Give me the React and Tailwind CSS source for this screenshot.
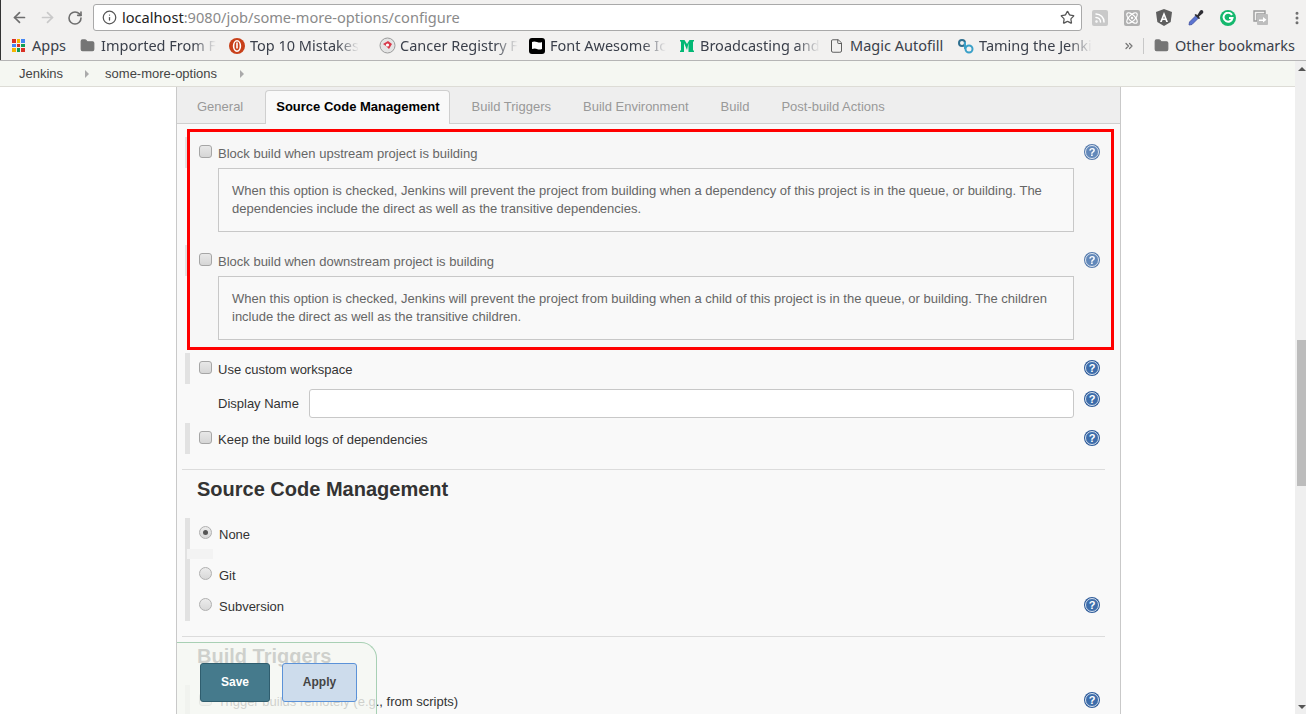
import { ArrowLeft, ArrowRight, RotateCw, Info, Star, Rss, Atom, EllipsisVertical, Folder, File, ChevronsRight } from 'lucide-react';

const appColors = ['#d93025', '#f4b400', '#4285f4', '#4285f4', '#d93025', '#0f9d58', '#f4b400', '#0f9d58', '#d93025'];

const Bookmark = ({ width, icon, gap = 'gap-[5px]', fade, children }) => (
  <div className={`flex items-center shrink-0 ${gap}`} style={{ width }}>
    {icon}
    <span className={`text-[14.5px] text-[#3a3f4a] whitespace-nowrap ${fade ? '[mask-image:linear-gradient(to_right,black_80%,transparent_100%)]' : ''}`}>
      {children}
    </span>
  </div>
);

const FolderIcon = () => <Folder className="w-[15px] h-[15px] text-[#757575] shrink-0" fill="#757575" />;

const BrowserChrome = () => (
  <header className="border-l border-[#333] bg-[#f2f1f0] font-['Noto_Sans',sans-serif]">
    {/* toolbar */}
    <div className="h-[33px] flex items-center pl-[10px] pt-[2px]">
      <ArrowLeft className="w-[17px] h-[17px] text-[#6e6e6e]" strokeWidth={2.4} />
      <ArrowRight className="w-[17px] h-[17px] text-[#c9c9c9] ml-[11px]" strokeWidth={2.4} />
      <RotateCw className="w-[16px] h-[16px] text-[#6e6e6e] ml-[11px]" strokeWidth={2.4} />
      <div className="ml-[10px] w-[989px] h-[27px] bg-white border border-[#a9a9a9] rounded-[3px] flex items-center pl-[8px] pr-[6px]">
        <Info className="w-[15px] h-[15px] text-[#555]" />
        <span className="ml-[5px] text-[14.6px] text-[#222]">localhost<span className="text-[#8a8a8a]">:9080/job/some-more-options/configure</span></span>
        <Star className="w-[15px] h-[15px] text-[#555] ml-auto" strokeWidth={2} />
      </div>
      <div className="ml-[10px] flex items-center gap-[16px]">
        <div className="w-[16px] h-[16px] rounded-[2px] bg-[#c9c9c9] flex items-center justify-center"><Rss className="w-[12px] h-[12px] text-white" strokeWidth={3} /></div>
        <div className="w-[16px] h-[16px] rounded-[2px] bg-[#b0b0b0] flex items-center justify-center"><Atom className="w-[14px] h-[14px] text-white" /></div>
        <svg width="16" height="17" viewBox="0 0 16 17">
          <path d="M8 0 L16 3 L14.7 13 L8 17 L1.3 13 L0 3 Z" fill="#5f5f5f" />
          <path d="M8 3 L4 13 H5.8 L6.6 11 H9.4 L10.2 13 H12 Z M7.2 9.5 L8 7.2 L8.8 9.5 Z" fill="#fff" />
        </svg>
        <svg width="16" height="17" viewBox="0 0 16 17">
          <path d="M1 16 L1.5 13 L8 6.5 L10.5 9 L4 15.5 Z" fill="#5b74d0" stroke="#3f4f9f" strokeWidth="0.8" />
          <path d="M7.5 5 L9.5 6 L12 1.8 Q13.5 0.2 15 1.8 Q16 3.2 14.6 4.6 L11 7.5 L12 9.5 L10.8 10 L6.5 6 Z" fill="#2e2e34" />
        </svg>
        <div className="w-[16px] h-[16px] rounded-full bg-[#15b86e] flex items-center justify-center">
          <svg width="12" height="12" viewBox="0 0 12 12" fill="none" stroke="#fff" strokeWidth="2"><path d="M10 3 A4.5 4.5 0 1 0 10.5 6 H7" /></svg>
        </div>
        <svg width="16" height="16" viewBox="0 0 16 16" className="ml-px">
          <path d="M1 1 H12 V4 H4 V11 H1 Z" fill="none" stroke="#9a9a9a" strokeWidth="1.4" />
          <rect x="4" y="4" width="11" height="11" rx="1" fill="#bdbdbd" />
          <path d="M6 9.5 H10 V7 L13.5 9.8 L10 12.5 V11 H6 Z" fill="#fff" />
        </svg>
        <EllipsisVertical className="w-[16px] h-[16px] text-[#6e6e6e] ml-[4px]" strokeWidth={2.5} />
      </div>
    </div>
    {/* bookmarks */}
    <div className="h-[27px] flex items-center pl-[11px] pb-[2px]">
      <Bookmark width="68px" gap="gap-[7px]" icon={
        <div className="grid grid-cols-3 gap-[1px] w-[13px] shrink-0">
          {appColors.map((c, i) => <span key={i} className="w-[3.6px] h-[3.6px]" style={{ background: c }} />)}
        </div>
      }>Apps</Bookmark>
      <Bookmark width="149px" gap="gap-[6px]" icon={<FolderIcon />} fade>Imported From F</Bookmark>
      <Bookmark width="150px" icon={
        <svg width="16" height="16" viewBox="0 0 16 16" className="shrink-0">
          <circle cx="8" cy="8" r="8" fill="#c8401a" />
          <ellipse cx="8" cy="8" rx="3.4" ry="5.2" fill="none" stroke="#fff" strokeWidth="1.6" />
          <rect x="7.2" y="4.5" width="1.6" height="6" fill="#fff" />
        </svg>
      } fade>Top 10 Mistakes</Bookmark>
      <Bookmark width="150px" gap="gap-[4px]" icon={
        <svg width="17" height="17" viewBox="0 0 17 17" className="shrink-0">
          <circle cx="8.5" cy="8.5" r="7.5" fill="#e4e4e4" stroke="#9a9a9a" />
          <path d="M4 7 L9 4 L13 7 L10 12 L7 9 Z" fill="#d8394a" />
          <circle cx="8.5" cy="8" r="1.6" fill="#fff" />
        </svg>
      } fade>Cancer Registry F</Bookmark>
      <Bookmark width="151px" icon={
        <div className="w-[16px] h-[16px] rounded-[3px] bg-black flex items-center justify-center shrink-0">
          <svg width="12" height="10" viewBox="0 0 12 10"><path d="M1 1 Q3 0 6 1 T11 1 V8 Q8 9 6 8 T1 8 Z" fill="#fff" /></svg>
        </div>
      } fade>Font Awesome Ic</Bookmark>
      <Bookmark width="150px" gap="gap-[6px]" icon={
        <svg width="14" height="12" viewBox="0 0 14 12" className="shrink-0">
          <path d="M0 0 H4.5 L7 4 L9.5 0 H14 V1 L13 2 V10 L14 11 V12 H8.5 V3 L7 10 L4 3 V12 H0 V11 L1 10 V2 L0 1 Z" fill="#02b875" />
        </svg>
      } fade>Broadcasting and</Bookmark>
      <Bookmark width="128px" gap="gap-[6px]" icon={<File className="w-[15px] h-[16px] text-[#555] shrink-0 -ml-[1px]" strokeWidth={1.5} />}>Magic Autofill</Bookmark>
      <Bookmark width="165px" gap="gap-[5px]" icon={
        <svg width="16" height="16" viewBox="0 0 16 16" fill="none" strokeWidth="2" className="shrink-0">
          <circle cx="4" cy="5" r="3" stroke="#2f6f8f" />
          <circle cx="11" cy="11" r="3.5" stroke="#3aa0c8" />
          <path d="M7 4 V11" stroke="#3aa0c8" />
        </svg>
      } fade>Taming the Jenki</Bookmark>
      <ChevronsRight className="w-[12px] h-[12px] text-[#777]" strokeWidth={2.5} />
      <div className="w-px h-[16px] bg-[#c8c8c8] ml-[8px] mr-[10px]" />
      <Bookmark width="142px" gap="gap-[6px]" icon={<FolderIcon />}>Other bookmarks</Bookmark>
    </div>
  </header>
);

const HelpIcon = ({ faded }) => (
  <svg width="16" height="16" viewBox="0 0 16 16" className={`shrink-0 ${faded ? 'opacity-80' : ''}`}>
    <circle cx="8" cy="8" r="8" fill="#2f5c9a" />
    <circle cx="8" cy="8" r="6.5" fill="#3d6dab" stroke="#e8eef6" strokeWidth="0.9" />
    <text x="8" y="12" textAnchor="middle" fontSize="11" fontWeight="700" fill="#fff" fontFamily="Liberation Sans, sans-serif">?</text>
  </svg>
);

const Checkbox = () => (
  <span className="block w-[13px] h-[13px] shrink-0 rounded-[3px] border border-[#a6a6a6] bg-gradient-to-b from-[#e8e8e8] to-[#d6d6d6] -translate-y-px" />
);

const Radio = ({ checked }) => (
  <span className="w-[13px] h-[13px] shrink-0 rounded-full border border-[#b0b0b0] bg-gradient-to-b from-[#ececec] to-[#d8d8d8] flex items-center justify-center -translate-y-px">
    {checked && <span className="w-[5px] h-[5px] rounded-full bg-[#555]" />}
  </span>
);

const HelpBox = ({ children }) => (
  <div className="ml-[28px] mr-[37px] h-[64px] border border-[#c8c8c8] bg-[#f9f9f9] px-[13px] pt-[13px] text-[13px] leading-[18px] text-[#666]">
    {children}
  </div>
);

const HighlightedRow = ({ label }) => (
  <div className="h-[31px] -ml-[5px] flex items-center text-[13px] text-[#666]">
    <span className="w-[2px] h-full bg-[#e2e2e2]" />
    <span className="ml-[12px]"><Checkbox /></span>
    <span className="ml-[6px] pt-[2px] flex-1">{label}</span>
    <span className="mr-[11px] -translate-y-px"><HelpIcon faded /></span>
  </div>
);

// x=185 is where the grey bars start
const OptionRow = ({ label, className = '' }) => (
  <div className={`h-[31px] flex items-center text-[13px] text-[#333] ${className}`}>
    <span className="w-[5px] h-full bg-[#e2e2e2]" />
    <span className="ml-[9px]"><Checkbox /></span>
    <span className="ml-[6px] pt-[2px] flex-1">{label}</span>
    <span className="-translate-y-px"><HelpIcon /></span>
  </div>
);

const RadioRow = ({ label, checked, help }) => (
  <div className="h-[31px] flex items-center text-[13px] text-[#333]">
    <span className="ml-[9px]"><Radio checked={checked} /></span>
    <span className="ml-[7px] pt-[2px] flex-1">{label}</span>
    {help && <span className="-translate-y-px"><HelpIcon /></span>}
  </div>
);

const tabs = [
  { label: 'Build Triggers', className: 'ml-[22px]' },
  { label: 'Build Environment', className: 'ml-[32px]' },
  { label: 'Build', className: 'ml-[32px]' },
  { label: 'Post-build Actions', className: 'ml-[32px]' },
];

const TabBar = () => (
  <div className="h-[37px] bg-[#eeeeee] border-b border-[#cfcfcf] flex items-end text-[13px] text-[#999]">
    <span className="ml-[20px] h-[33px] flex items-center">General</span>
    <span className="ml-[22px] h-[34px] -mb-px pl-[10px] pr-[9px] pb-[2px] bg-[#f9f9f9] border border-[#cfcfcf] border-b-0 rounded-t-[4px] flex items-center font-bold text-black">
      Source Code Management
    </span>
    {tabs.map((t) => (
      <span key={t.label} className={`${t.className} h-[33px] flex items-center`}>{t.label}</span>
    ))}
  </div>
);

export default function App() {
  return (
    <div className="w-[1306px] h-[714px] overflow-hidden bg-white font-['Liberation_Sans',Arial,sans-serif]">
      <BrowserChrome />
      <div className="border-t border-[#b5b5b5] flex h-[654px]">
        <div className="w-[1295px] flex flex-col">
          {/* breadcrumb */}
          <div className="h-[26px] shrink-0 bg-[#f5f7f2] border-b border-[#dddcd6] flex items-center text-[13px] text-[#444] pl-[19px]">
            <span>Jenkins</span>
            <span className="ml-[22px] w-0 h-0 border-y-[4px] border-y-transparent border-l-[4px] border-l-[#aaa]" />
            <span className="ml-[16px]">some-more-options</span>
            <span className="ml-[23px] w-0 h-0 border-y-[4px] border-y-transparent border-l-[4px] border-l-[#aaa]" />
          </div>
          <div className="flex-1 min-h-0 flex">
            <div className="w-[176px] shrink-0" />
            <main className="relative w-[945px] shrink-0 overflow-hidden bg-[#f9f9f9] border-x border-[#c9c9c9]">
              <TabBar />
              <div className="pl-[8px] pr-[20px]">
                {/* red annotation around the two block options */}
                <div className="ml-[2px] mt-[5px] w-[927px] h-[221px] border-[3px] border-[#ff0000] bg-[#f7f7f7] pt-[5px]">
                  <HighlightedRow label="Block build when upstream project is building" />
                  <HelpBox>
                    When this option is checked, Jenkins will prevent the project from building when a dependency of this project is in the queue, or building. The dependencies include the direct as well as the transitive dependencies.
                  </HelpBox>
                  <div className="mt-[13px]">
                    <HighlightedRow label="Block build when downstream project is building" />
                  </div>
                  <HelpBox>
                    When this option is checked, Jenkins will prevent the project from building when a child of this project is in the queue, or building. The children include the direct as well as the transitive children.
                  </HelpBox>
                </div>

                <OptionRow label="Use custom workspace" className="mt-[3px]" />
                <div className="mt-[5px] h-[29px] flex text-[13px] text-[#333]">
                  <span className="ml-[33px] w-[91px] h-full flex items-center">Display Name</span>
                  <div className="w-[765px] h-full bg-white border border-[#c8c8c8] rounded-[3px]" />
                  <span className="ml-[10px] mt-[2px]"><HelpIcon /></span>
                </div>
                <OptionRow label="Keep the build logs of dependencies" className="mt-[5px]" />

                <div className="mt-[15px] -ml-[3px] w-[923px] h-px bg-[#dcdcdc]" />
                <h2 className="mt-[8px] ml-[12px] text-[20px] leading-[23px] font-bold text-[#333]">Source Code Management</h2>

                <div className="mt-[17px] border-l-[5px] border-[#e2e2e2]">
                  <RadioRow label="None" checked />
                  <div className="h-[10px] -ml-[3px] w-[26px] bg-[#f3f3f3]" />
                  <RadioRow label="Git" />
                  <RadioRow label="Subversion" help />
                </div>

                <div className="mt-[15px] -ml-[3px] w-[923px] h-px bg-[#dcdcdc]" />
                <h2 className="mt-[8px] ml-[12px] text-[20px] leading-[23px] font-bold text-[#333]">Build Triggers</h2>
                <OptionRow label="Trigger builds remotely (e.g., from scripts)" className="mt-[17px]" />
              </div>

              {/* floating save bar */}
              <div className="absolute left-0 bottom-0 w-[200px] h-[72px] bg-[#f5f8f2]/80 border-t border-r border-[#a8d0b4] rounded-tr-[16px] flex gap-[12px] pl-[23px] pt-[20px]">
                <button className="w-[70px] h-[39px] pb-[2px] bg-[#457a8c] border border-[#2f5d6e] rounded-[3px] text-[12px] font-bold text-white">Save</button>
                <button className="w-[75px] h-[39px] pb-[2px] bg-[#cddcec] border border-[#5b92d8] rounded-[3px] text-[12px] font-bold text-[#444]">Apply</button>
              </div>
            </main>
            <div className="flex-1" />
          </div>
        </div>
        {/* scrollbar */}
        <div className="w-[11px] bg-[#efefef] flex flex-col items-end pl-[2px]">
          <span className="mx-auto mt-[6px] w-0 h-0 border-x-[4px] border-x-transparent border-b-[4px] border-b-[#555]" />
          <div className="mt-[269px] w-full h-[146px] bg-[#bcbcbc]" />
          <span className="mx-auto mt-auto mb-[5px] w-0 h-0 border-x-[4px] border-x-transparent border-t-[4px] border-t-[#555]" />
        </div>
      </div>
    </div>
  );
}
